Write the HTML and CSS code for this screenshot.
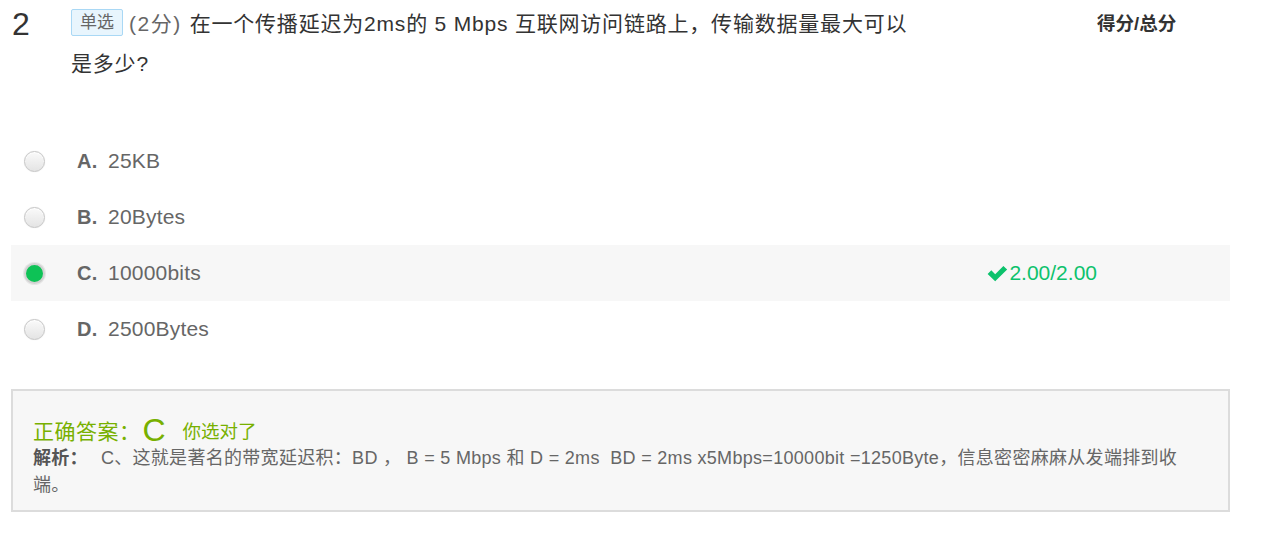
FILE: index.html
```html
<!DOCTYPE html>
<html lang="zh-CN">
<head>
<meta charset="utf-8">
<title>Question 2</title>
<link rel="stylesheet" href="styles.css">
</head>
<body>
<div class="question">
  <div class="q-head">
    <div class="q-num">2</div>
    <div class="q-body">
      <span class="q-tag">单选</span><span class="q-point">(2分)</span>在一个传播延迟为2ms的 5 Mbps 互联网访问链路上，传输数据量最大可以是多少?
    </div>
    <div class="q-score-title">得分/总分</div>
  </div>

  <ul class="options">
    <li class="option">
      <span class="radio"></span>
      <span class="opt-label">A.</span>
      <span class="opt-text">25KB</span>
    </li>
    <li class="option">
      <span class="radio"></span>
      <span class="opt-label">B.</span>
      <span class="opt-text">20Bytes</span>
    </li>
    <li class="option option-selected">
      <span class="radio radio-on"></span>
      <span class="opt-label">C.</span>
      <span class="opt-text">10000bits</span>
      <span class="opt-score">
        <svg class="check" viewBox="0 0 20 16" width="21" height="17"><path d="M0.6 8.4 L4.1 4.9 L7.8 8.6 L15.6 0.8 L19.2 4.3 L7.8 15.4 Z" fill="#0cc26c"/></svg>2.00/2.00
      </span>
    </li>
    <li class="option">
      <span class="radio"></span>
      <span class="opt-label">D.</span>
      <span class="opt-text">2500Bytes</span>
    </li>
  </ul>

  <div class="analysis-box">
    <div class="answer-line">
      <span class="answer-title">正确答案：</span><span class="answer-letter">C</span><span class="answer-note">你选对了</span>
    </div>
    <div class="analysis">
      <span class="analysis-title">解析：</span><span class="analysis-text">C、这就是著名的带宽延迟积：BD ， B = 5 Mbps 和 D = 2ms &nbsp;BD = 2ms x5Mbps=10000bit =1250Byte，信息密密麻麻从发端排到收端。</span>
    </div>
  </div>
</div>
</body>
</html>
```

FILE: styles.css
```css
* {
  box-sizing: border-box;
}

body {
  margin: 0;
  background: #fff;
  font-family: "Liberation Sans", Arial, "Noto Sans CJK SC", sans-serif;
  color: #333;
}

.question {
  width: 1230px;
  padding-left: 11px;
}

.q-head {
  display: flex;
  align-items: flex-start;
  padding-top: 4px;
}

.q-num {
  width: 60px;
  font-size: 32px;
  line-height: 40px;
  color: #333;
  padding-left: 1px;
}

.q-body {
  width: 850px;
  font-size: 21px;
  line-height: 40px;
  color: #333;
  letter-spacing: 0.8px;
}

.q-tag {
  display: inline-block;
  font-size: 17px;
  line-height: 25px;
  padding: 0 8px;
  color: #666;
  background: #e8f5fd;
  border: 1px solid #a9d8f5;
  border-radius: 2px;
  vertical-align: 3px;
  letter-spacing: 0;
}

.q-point {
  color: #666;
  margin-left: 6px;
  margin-right: 8px;
  letter-spacing: 1.5px;
}

.q-score-title {
  margin-left: 176px;
  font-size: 18.5px;
  font-weight: bold;
  line-height: 40px;
  color: #333;
}

.options {
  list-style: none;
  margin: 49px 0 0 0;
  padding: 0;
}

.option {
  display: flex;
  align-items: center;
  height: 56px;
  padding-left: 13px;
  font-size: 21px;
  color: #666;
  letter-spacing: 0.2px;
}

.option-selected {
  background: #f7f7f7;
}

.radio {
  width: 21px;
  height: 21px;
  border-radius: 50%;
  border: 1px solid #c6c6c6;
  background: linear-gradient(#fafafa, #e4e4e4);
  box-shadow: inset 0 1px 1px #fff, 0 0 1px #ddd;
}

.radio-on {
  background: #0ec256;
  border: 2px solid #d2d2d2;
  box-shadow: 0 0 0 1px #e6e6e6;
}

.opt-label {
  margin-left: 32px;
  font-weight: bold;
  font-size: 20px;
  width: 31px;
}

.opt-score {
  margin-left: auto;
  margin-right: 133px;
  display: flex;
  align-items: center;
  color: #0cc26c;
  font-size: 21px;
  letter-spacing: 0;
}

.check {
  margin-right: 1px;
}

.analysis-box {
  margin-top: 32px;
  border: 2px solid #dcdcdc;
  background: #f7f7f7;
  padding: 24px 20px 11px 20px;
}

.answer-line {
  display: flex;
  align-items: center;
  height: 30px;
  color: #78b000;
}

.answer-title {
  font-size: 21px;
  letter-spacing: 0.5px;
}

.answer-letter {
  font-size: 32px;
  margin-left: 2px;
}

.answer-note {
  font-size: 18.5px;
  margin-left: 17px;
}

.analysis {
  font-size: 18px;
  line-height: 27px;
  color: #666;
  letter-spacing: 0.3px;
}

.analysis-title {
  font-weight: bold;
  color: #555;
  margin-right: 13px;
}
```
